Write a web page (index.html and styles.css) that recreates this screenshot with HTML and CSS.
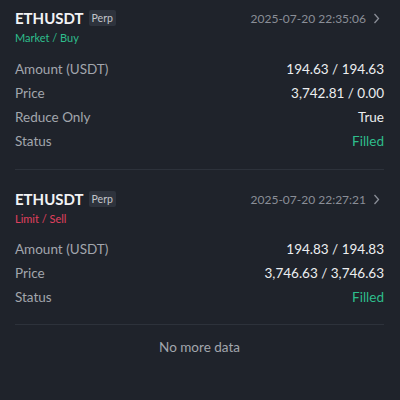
FILE: index.html
```html
<!DOCTYPE html>
<html lang="en">
<head>
    <meta charset="UTF-8">
    <title>Order History</title>
    <link rel="stylesheet" href="styles.css">
</head>
<body>
    <div class="order-list">
        <div class="order">
            <div class="order-head">
                <div class="symbol">
                    <span class="symbol-name">ETHUSDT</span>
                    <span class="badge">Perp</span>
                </div>
                <div class="time">
                    2025-07-20 22:35:06
                    <svg class="chevron" width="7" height="11" viewBox="0 0 7 11"><path d="M1.5 1 L5.5 5.5 L1.5 10" fill="none" stroke="#8a8e97" stroke-width="1.3"/></svg>
                </div>
            </div>
            <div class="side buy">Market / Buy</div>
            <div class="rows">
                <div class="row"><span class="label">Amount (USDT)</span><span class="value">194.63 / 194.63</span></div>
                <div class="row"><span class="label">Price</span><span class="value">3,742.81 / 0.00</span></div>
                <div class="row"><span class="label">Reduce Only</span><span class="value">True</span></div>
                <div class="row"><span class="label">Status</span><span class="value filled">Filled</span></div>
            </div>
        </div>
        <div class="order">
            <div class="order-head">
                <div class="symbol">
                    <span class="symbol-name">ETHUSDT</span>
                    <span class="badge">Perp</span>
                </div>
                <div class="time">
                    2025-07-20 22:27:21
                    <svg class="chevron" width="7" height="11" viewBox="0 0 7 11"><path d="M1.5 1 L5.5 5.5 L1.5 10" fill="none" stroke="#8a8e97" stroke-width="1.3"/></svg>
                </div>
            </div>
            <div class="side sell">Limit / Sell</div>
            <div class="rows">
                <div class="row"><span class="label">Amount (USDT)</span><span class="value">194.83 / 194.83</span></div>
                <div class="row"><span class="label">Price</span><span class="value">3,746.63 / 3,746.63</span></div>
                <div class="row"><span class="label">Status</span><span class="value filled">Filled</span></div>
            </div>
        </div>
        <div class="no-more">No more data</div>
    </div>
</body>
</html>
```

FILE: styles.css
```css
body {
    margin: 0;
    background-color: #1f232b;
    font-family: Lato, 'Noto Sans', sans-serif;
    color: #e8eaed;
    height: 400px;
    overflow: hidden;
}

.order-list {
    padding: 0 16px 0 15px;
}

.order {
    padding-top: 9px;
    padding-bottom: 16px;
    border-bottom: 1px solid #2d323b;
}

.order + .order {
    padding-top: 20px;
    padding-bottom: 15px;
}

.order-head {
    display: flex;
    justify-content: space-between;
    align-items: center;
    height: 18px;
}

.symbol {
    display: flex;
    align-items: center;
    gap: 5px;
}

.symbol-name {
    font-size: 15px;
    font-weight: 700;
    color: #f2f3f5;
}

.badge {
    font-size: 10.5px;
    color: #c2c5cb;
    background-color: #2e333d;
    border-radius: 2px;
    padding: 2px 3px;
    line-height: 12px;
}

.time {
    display: flex;
    align-items: center;
    gap: 7px;
    font-size: 12px;
    color: #8a8e97;
    padding-right: 4px;
}

.side {
    font-size: 11px;
    margin-top: 3px;
    line-height: 16px;
}

.buy {
    color: #2ebd8c;
}

.sell {
    color: #e0405e;
}

.rows {
    margin-top: 11px;
    display: flex;
    flex-direction: column;
}

.order + .order .rows {
    margin-top: 10px;
}

.row {
    display: flex;
    justify-content: space-between;
    align-items: center;
    height: 24px;
    font-size: 13.5px;
}

.label {
    color: #a2a6ad;
}

.value {
    color: #eceef0;
}

.value.filled {
    color: #2ebd8c;
}

.no-more {
    text-align: center;
    font-size: 13.5px;
    color: #a2a6ad;
    padding-top: 14px;
}
```
